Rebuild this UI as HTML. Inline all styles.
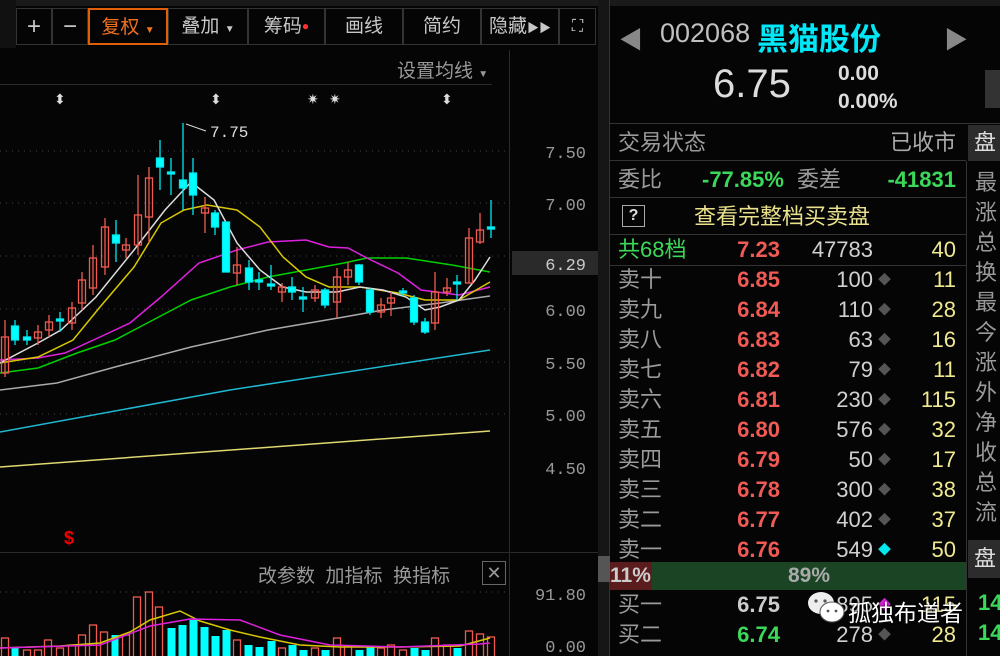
<!DOCTYPE html>
<html><head><meta charset="utf-8"><style>
*{margin:0;padding:0;box-sizing:border-box}
body{width:1000px;height:656px;background:#050505;overflow:hidden;position:relative;font-family:"Liberation Sans","Noto Sans CJK SC",sans-serif;color:#bbb}
.a{position:absolute;white-space:nowrap}
.tb{position:absolute;top:8px;height:37px;border:1px solid #333;color:#c8c8c8;font-size:19px;line-height:35px;text-align:center}
.r{position:absolute;left:610px;width:356px;height:30px;font-size:22px;line-height:30px}
.r span{position:absolute}
.lb{left:8px;color:#9a9a9a}
.pr{right:186px;color:#f05a55;font-weight:bold}
.vo{right:93px;color:#d0d0d0}
.dm{left:268px;top:0;color:#555;font-size:13px}
.ct{right:10px;color:#f0e890}
.rc{position:absolute;left:975px;font-size:22px;color:#9a9a9a}
</style></head><body>
<div class="a" style="left:0;top:0;width:1000px;height:6px;background:#1a1a1a"></div>
<div class="a" style="left:0;top:0;width:16px;height:48px;background:#111"></div>
<div class="a" style="left:598px;top:0;width:12px;height:656px;background:#161616;border-right:1px solid #333"></div>
<div class="a" style="left:598px;top:556px;width:12px;height:26px;background:#555"></div>
<!-- toolbar -->
<div class="tb" style="left:16px;width:36px;font-size:24px">+</div>
<div class="tb" style="left:52px;width:36px;font-size:24px">−</div>
<div class="tb" style="left:88px;width:80px;border:2px solid #e0600a;color:#f07020">复权 <span style="font-size:10px">▼</span></div>
<div class="tb" style="left:168px;width:80px">叠加 <span style="font-size:10px">▼</span></div>
<div class="tb" style="left:248px;width:77px">筹码<span style="color:#ff3030;font-size:12px;vertical-align:top">●</span></div>
<div class="tb" style="left:325px;width:78px">画线</div>
<div class="tb" style="left:403px;width:78px">简约</div>
<div class="tb" style="left:481px;width:78px">隐藏<span style="font-size:12px">▶▶</span></div>
<div class="tb" style="left:559px;width:37px;font-size:16px">⛶</div>
<div class="a" style="left:509px;top:50px;width:1px;height:606px;background:#2a2a2a"></div>
<div class="a" style="left:0;top:84px;width:492px;height:1px;background:#2a2a2a"></div>
<div class="a" style="left:397px;top:56px;font-size:19px;color:#999">设置均线 <span style="font-size:10px">▼</span></div>
<div class="a" style="left:0;top:552px;width:598px;height:1px;background:#2a2a2a"></div>
<div class="a" style="left:258px;top:561px;font-size:19px;color:#999">改参数&nbsp;&nbsp;加指标&nbsp;&nbsp;换指标</div>
<div class="a" style="left:482px;top:561px;width:24px;height:24px;border:1px solid #666;color:#999;font-size:18px;line-height:22px;text-align:center">✕</div>
<div class="a" style="left:64px;top:528px;color:#e00;font-size:18px;font-weight:bold">$</div>
<svg class="a" style="left:0;top:0" width="598" height="656">
<g stroke="#444" stroke-dasharray="1 5"><line x1="0" y1="151" x2="505" y2="151"/><line x1="0" y1="203" x2="505" y2="203"/><line x1="0" y1="256" x2="505" y2="256"/><line x1="0" y1="309" x2="505" y2="309"/><line x1="0" y1="362" x2="505" y2="362"/><line x1="0" y1="414" x2="505" y2="414"/><line x1="0" y1="592" x2="505" y2="592"/></g>
<g fill="#999" font-family="Liberation Mono,monospace" font-size="17" text-anchor="end"><text x="586" y="158">7.50</text><text x="586" y="210">7.00</text><text x="586" y="316">6.00</text><text x="586" y="369">5.50</text><text x="586" y="421">5.00</text><text x="586" y="474">4.50</text><text x="586" y="600">91.80</text><text x="586" y="652">0.00</text></g>
<rect x="512" y="251" width="86" height="24" fill="#2a2a2a"/><text x="586" y="270" fill="#ccc" font-family="Liberation Mono,monospace" font-size="17" text-anchor="end">6.29</text>
<g fill="#ddd" font-size="14"><text x="54" y="104">⬍</text><text x="210" y="104">⬍</text><text x="307" y="104">✷</text><text x="329" y="104">✷</text><text x="441" y="104">⬍</text></g>
<text x="210" y="137" fill="#ddd" font-family="Liberation Mono,monospace" font-size="16">7.75</text><line x1="186" y1="124" x2="206" y2="131" stroke="#ddd"/>
<g fill="none" stroke-width="1.5">
<polyline stroke="#e0d870" points="0,467 490,431"/>
<polyline stroke="#20b8d0" points="0,432 230,390 490,350"/>
<polyline stroke="#aaa" points="0,390 57,383 115,367 191,347 268,330 344,317 383,310 440,303 490,296"/>
<polyline stroke="#00d000" points="0,373 38,368 77,353 115,340 153,320 191,300 230,287 268,277 306,270 344,263 367,258 406,258 452,265 490,272"/>
<polyline stroke="#e020e0" points="0,360 38,358 65,353 100,337 130,323 161,297 199,263 237,250 268,242 306,240 329,247 348,248 367,258 398,273 421,290 459,295 490,287"/>
<polyline stroke="#d8c800" points="0,363 38,357 73,340 100,307 134,267 161,223 184,210 207,205 237,210 260,227 283,257 306,277 329,287 360,287 398,293 425,300 459,300 490,282"/>
<polyline stroke="#ddd" points="0,363 38,343 61,330 96,297 134,250 165,210 191,182 214,200 237,243 260,270 283,287 306,292 337,292 360,287 383,290 406,297 425,310 440,307 459,300 475,280 490,257"/>
</g>
<g stroke="#f05a50" fill="none" stroke-width="1.3">
<line x1="5" y1="320" x2="5" y2="377"/><rect x="1.5" y="337" width="7" height="36"/>
<line x1="38" y1="325" x2="38" y2="345"/><rect x="34.5" y="332" width="7" height="6"/>
<line x1="49" y1="315" x2="49" y2="337"/><rect x="45.5" y="322" width="7" height="8"/>
<line x1="72" y1="302" x2="72" y2="330"/><rect x="68.5" y="308" width="7" height="15"/>
<line x1="82" y1="272" x2="82" y2="310"/><rect x="78.5" y="280" width="7" height="23"/>
<line x1="93" y1="245" x2="93" y2="295"/><rect x="89.5" y="258" width="7" height="30"/>
<line x1="105" y1="218" x2="105" y2="275"/><rect x="101.5" y="227" width="7" height="40"/>
<line x1="126" y1="238" x2="126" y2="258"/><rect x="122.5" y="245" width="7" height="5"/>
<line x1="138" y1="175" x2="138" y2="255"/><rect x="134.5" y="215" width="7" height="30"/>
<line x1="149" y1="167" x2="149" y2="243"/><rect x="145.5" y="178" width="7" height="39"/>
<line x1="205" y1="197" x2="205" y2="233"/><rect x="201.5" y="208" width="7" height="5"/>
<line x1="237" y1="247" x2="237" y2="285"/><rect x="233.5" y="265" width="7" height="8"/>
<line x1="282" y1="283" x2="282" y2="302"/><rect x="278.5" y="287" width="7" height="5"/>
<line x1="315" y1="285" x2="315" y2="302"/><rect x="311.5" y="290" width="7" height="8"/>
<line x1="337" y1="268" x2="337" y2="318"/><rect x="333.5" y="277" width="7" height="25"/>
<line x1="348" y1="262" x2="348" y2="285"/><rect x="344.5" y="270" width="7" height="7"/>
<line x1="381" y1="298" x2="381" y2="318"/><rect x="377.5" y="305" width="7" height="7"/>
<line x1="391" y1="292" x2="391" y2="316"/><rect x="387.5" y="298" width="7" height="5"/>
<line x1="435" y1="272" x2="435" y2="330"/><rect x="431.5" y="292" width="7" height="31"/>
<line x1="447" y1="278" x2="447" y2="296"/><rect x="443.5" y="288" width="7" height="4"/>
<line x1="469" y1="228" x2="469" y2="283"/><rect x="465.5" y="238" width="7" height="45"/>
<line x1="480" y1="213" x2="480" y2="244"/><rect x="476.5" y="230" width="7" height="12"/>
</g>
<g stroke="#00e8f0" fill="#00ffff" stroke-width="1.3">
<line x1="15" y1="320" x2="15" y2="345"/><rect x="11.5" y="326" width="7" height="14"/>
<line x1="27" y1="330" x2="27" y2="345"/><rect x="23.5" y="337" width="7" height="3"/>
<line x1="60" y1="312" x2="60" y2="332"/><rect x="56.5" y="319" width="7" height="2"/>
<line x1="116" y1="220" x2="116" y2="262"/><rect x="112.5" y="235" width="7" height="8"/>
<line x1="160" y1="140" x2="160" y2="190"/><rect x="156.5" y="158" width="7" height="9"/>
<line x1="171" y1="158" x2="171" y2="195"/><rect x="167.5" y="172" width="7" height="2"/>
<line x1="183" y1="123" x2="183" y2="210"/><rect x="179.5" y="180" width="7" height="8"/>
<line x1="193" y1="158" x2="193" y2="215"/><rect x="189.5" y="173" width="7" height="22"/>
<line x1="215" y1="210" x2="215" y2="235"/><rect x="211.5" y="213" width="7" height="14"/>
<line x1="226" y1="222" x2="226" y2="272"/><rect x="222.5" y="222" width="7" height="50"/>
<line x1="249" y1="260" x2="249" y2="290"/><rect x="245.5" y="268" width="7" height="14"/>
<line x1="259" y1="272" x2="259" y2="290"/><rect x="255.5" y="280" width="7" height="2"/>
<line x1="271" y1="265" x2="271" y2="290"/><rect x="267.5" y="284" width="7" height="2"/>
<line x1="292" y1="277" x2="292" y2="300"/><rect x="288.5" y="287" width="7" height="5"/>
<line x1="303" y1="287" x2="303" y2="312"/><rect x="299.5" y="297" width="7" height="2"/>
<line x1="325" y1="288" x2="325" y2="308"/><rect x="321.5" y="290" width="7" height="15"/>
<line x1="359" y1="264" x2="359" y2="285"/><rect x="355.5" y="265" width="7" height="17"/>
<line x1="370" y1="288" x2="370" y2="315"/><rect x="366.5" y="290" width="7" height="22"/>
<line x1="403" y1="288" x2="403" y2="296"/><rect x="399.5" y="291" width="7" height="2"/>
<line x1="414" y1="295" x2="414" y2="325"/><rect x="410.5" y="298" width="7" height="24"/>
<line x1="425" y1="318" x2="425" y2="334"/><rect x="421.5" y="322" width="7" height="10"/>
<line x1="457" y1="275" x2="457" y2="300"/><rect x="453.5" y="282" width="7" height="2"/>
<line x1="491" y1="200" x2="491" y2="238"/><rect x="487.5" y="227" width="7" height="2"/>
</g>
<!-- volume -->
<g stroke="#f05a50" fill="none" stroke-width="1.3">
<rect x="1.5" y="638" width="7" height="20"/><rect x="23.5" y="650" width="7" height="8"/><rect x="34.5" y="650" width="7" height="8"/><rect x="44.5" y="640" width="7" height="18"/><rect x="56.5" y="648" width="7" height="10"/><rect x="68.5" y="645" width="7" height="13"/><rect x="78.5" y="635" width="7" height="23"/><rect x="89.5" y="625" width="7" height="33"/><rect x="100.5" y="632" width="7" height="26"/><rect x="122.5" y="635" width="7" height="23"/><rect x="133.5" y="597" width="7" height="61"/><rect x="145.5" y="592" width="7" height="66"/><rect x="155.5" y="607" width="7" height="51"/><rect x="233.5" y="640" width="7" height="18"/><rect x="278.5" y="648" width="7" height="10"/><rect x="311.5" y="648" width="7" height="10"/><rect x="333.5" y="638" width="7" height="20"/><rect x="344.5" y="646" width="7" height="12"/><rect x="377.5" y="648" width="7" height="10"/><rect x="387.5" y="645" width="7" height="13"/><rect x="399.5" y="650" width="7" height="8"/><rect x="431.5" y="638" width="7" height="20"/><rect x="443.5" y="645" width="7" height="13"/><rect x="465.5" y="631" width="7" height="27"/><rect x="476.5" y="634" width="7" height="24"/><rect x="487.5" y="637" width="7" height="21"/>
</g>
<g fill="#00ffff">
<rect x="11.5" y="647" width="7" height="10"/><rect x="111.5" y="635" width="7" height="22"/><rect x="167.5" y="628" width="8" height="30"/><rect x="178.5" y="625" width="8" height="33"/><rect x="189.5" y="620" width="8" height="38"/><rect x="200.5" y="627" width="8" height="31"/><rect x="211.5" y="636" width="8" height="22"/><rect x="222.5" y="630" width="8" height="28"/><rect x="244.5" y="645" width="8" height="13"/><rect x="255.5" y="647" width="8" height="11"/><rect x="267.5" y="641" width="8" height="17"/><rect x="288.5" y="645" width="8" height="13"/><rect x="299.5" y="650" width="8" height="8"/><rect x="321.5" y="650" width="8" height="8"/><rect x="355.5" y="650" width="8" height="8"/><rect x="366.5" y="647" width="8" height="11"/><rect x="410.5" y="648" width="8" height="10"/><rect x="421.5" y="650" width="8" height="8"/><rect x="453.5" y="648" width="8" height="10"/>
</g>
<polyline fill="none" stroke="#d8c800" stroke-width="1.5" points="0,648 60,646 100,643 130,632 150,620 180,611 200,621 230,630 260,637 300,645 340,647 400,647 460,646 490,638"/>
<polyline fill="none" stroke="#e020e0" stroke-width="1.5" points="0,648 100,645 150,626 190,619 240,620 280,635 330,645 400,647 480,644 490,643"/>
</svg>
<!-- right panel -->
<div class="a" style="left:619px;top:20px;color:#888;font-size:24px">◀</div>
<div class="a" style="left:944px;top:20px;color:#888;font-size:24px">▶</div>
<div class="a" style="left:660px;top:18px;color:#c0c0c0;font-size:27px">002068</div>
<div class="a" style="left:757px;top:14px;color:#00e8f8;font-size:31px;font-weight:bold">黑猫股份</div>
<div class="a" style="left:713px;top:62px;color:#ddd;font-size:40px">6.75</div>
<div class="a" style="left:838px;top:60px;color:#ddd;font-size:21px;font-weight:bold;line-height:28px">0.00<br>0.00%</div>
<div class="a" style="left:985px;top:70px;width:15px;height:38px;background:#333"></div>
<div class="a" style="left:610px;top:123px;width:390px;height:1px;background:#333"></div>
<div class="r" style="top:127px;height:32px;line-height:32px"><span class="lb">交易状态</span><span style="right:10px;color:#aaa">已收市</span></div>
<div class="a" style="left:968px;top:125px;width:32px;height:36px;background:#2c2c2c;color:#ddd;font-size:22px;line-height:36px;padding-left:6px">盘</div>
<div class="a" style="left:610px;top:160px;width:356px;height:1px;background:#333"></div>
<div class="r" style="top:163px;height:33px;line-height:33px"><span class="lb">委比</span><span style="left:92px;color:#3cd85a;font-weight:bold">-77.85%</span><span style="left:187px;color:#9a9a9a">委差</span><span style="right:10px;color:#3cd85a;font-weight:bold">-41831</span></div>
<div class="a" style="left:610px;top:197px;width:356px;height:1px;background:#333"></div>
<div class="a" style="left:622px;top:205px;width:23px;height:22px;border:1px solid #aaa;color:#ddd;font-size:16px;text-align:center;line-height:20px;font-weight:bold">?</div>
<div class="a" style="left:694px;top:200px;color:#e8e08a;font-size:22px;line-height:33px">查看完整档买卖盘</div>
<div class="a" style="left:610px;top:234px;width:356px;height:1px;background:#333"></div>
<div class="r" style="top:235px"><span class="lb" style="color:#3cd85a">共68档</span><span class="pr">7.23</span><span class="vo">47783</span><span class="ct">40</span></div>
<div class="a" style="left:610px;top:265px;width:356px;height:1px;background:#333"></div>
<div class="r" style="top:265px"><span class="lb">卖十</span><span class="pr">6.85</span><span class="vo">100</span><span class="dm">◆</span><span class="ct">11</span></div>
<div class="r" style="top:295px"><span class="lb">卖九</span><span class="pr">6.84</span><span class="vo">110</span><span class="dm">◆</span><span class="ct">28</span></div>
<div class="r" style="top:325px"><span class="lb">卖八</span><span class="pr">6.83</span><span class="vo">63</span><span class="dm">◆</span><span class="ct">16</span></div>
<div class="r" style="top:355px"><span class="lb">卖七</span><span class="pr">6.82</span><span class="vo">79</span><span class="dm">◆</span><span class="ct">11</span></div>
<div class="r" style="top:385px"><span class="lb">卖六</span><span class="pr">6.81</span><span class="vo">230</span><span class="dm">◆</span><span class="ct">115</span></div>
<div class="r" style="top:415px"><span class="lb">卖五</span><span class="pr">6.80</span><span class="vo">576</span><span class="dm">◆</span><span class="ct">32</span></div>
<div class="r" style="top:445px"><span class="lb">卖四</span><span class="pr">6.79</span><span class="vo">50</span><span class="dm">◆</span><span class="ct">17</span></div>
<div class="r" style="top:475px"><span class="lb">卖三</span><span class="pr">6.78</span><span class="vo">300</span><span class="dm">◆</span><span class="ct">38</span></div>
<div class="r" style="top:505px"><span class="lb">卖二</span><span class="pr">6.77</span><span class="vo">402</span><span class="dm">◆</span><span class="ct">37</span></div>
<div class="r" style="top:535px"><span class="lb">卖一</span><span class="pr">6.76</span><span class="vo">549</span><span class="dm" style="color:#00e8f0">◆</span><span class="ct">50</span></div>
<div class="a" style="left:610px;top:562px;width:42px;height:28px;background:#5a1c1c;color:#ccc;font-size:21px;font-weight:bold;line-height:28px">11%</div>
<div class="a" style="left:652px;top:562px;width:314px;height:28px;background:#1b4424;color:#aaa;font-size:21px;font-weight:bold;line-height:28px;text-align:center">89%</div>
<div class="r" style="top:590px"><span class="lb">买一</span><span class="pr" style="color:#ccc">6.75</span><span class="vo">895</span><span class="dm" style="color:#e020e0">◆</span><span class="ct">115</span></div>
<div class="r" style="top:620px"><span class="lb">买二</span><span class="pr" style="color:#3cd85a">6.74</span><span class="vo">278</span><span class="dm">◆</span><span class="ct">28</span></div>
<div class="a" style="left:966px;top:161px;width:1px;height:495px;background:#333"></div>
<div class="rc" style="top:168px;line-height:30px">最<br>涨<br>总<br>换<br>最<br>今<br>涨<br>外<br>净<br>收<br>总<br>流</div>
<div class="a" style="left:968px;top:540px;width:32px;height:38px;background:#2c2c2c;color:#ddd;font-size:22px;line-height:38px;padding-left:6px">盘</div>
<div class="a" style="left:978px;top:588px;color:#3cd85a;font-size:22px;line-height:30px;font-weight:bold">14<br>14</div>
<!-- watermark -->
<svg class="a" style="left:806px;top:590px" width="42" height="36"><ellipse cx="15" cy="13" rx="13" ry="11" fill="#eee"/><ellipse cx="26" cy="22" rx="12" ry="10" fill="#fff" stroke="#555"/><circle cx="10" cy="11" r="1.6" fill="#555"/><circle cx="19" cy="11" r="1.6" fill="#555"/><circle cx="22" cy="21" r="1.4" fill="#555"/><circle cx="30" cy="21" r="1.4" fill="#555"/></svg>
<div class="a" style="left:848px;top:594px;color:#fff;font-size:23px;text-shadow:0 0 3px #000">孤独布道者</div>
</body></html>
